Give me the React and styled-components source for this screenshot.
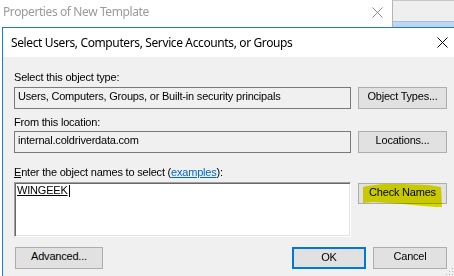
import React from "react";
import styled, { createGlobalStyle } from "styled-components";

const Global = createGlobalStyle`
  html, body { margin: 0; padding: 0; background: #fff; }
  body {
    width: 454px; height: 276px; overflow: hidden;
    font-family: "Liberation Sans", Arial, sans-serif;
  }
`;

const Screen = styled.div`
  width: 454px;
  height: 276px;
  overflow: hidden;
  background: #fff;
  display: flex;
  flex-direction: column;
  position: relative;
`;

const BackTitleBar = styled.div`
  height: 27px;
  flex-shrink: 0;
  display: flex;
  align-items: stretch;
`;

const BackTitle = styled.div`
  flex: 1;
  padding: 5px 0 0 3px;
  font-family: "Noto Sans", "Liberation Sans", sans-serif;
  font-size: 12px;
  line-height: 14px;
  letter-spacing: -0.4px;
  color: #9a9a9a;
  white-space: nowrap;
`;

const CloseBox = styled.div`
  width: ${(p) => p.$w}px;
  display: flex;
  align-items: ${(p) => (p.$top ? "flex-start" : "center")};
  justify-content: center;
  padding-top: ${(p) => (p.$top ? 7 : 0)}px;
  flex-shrink: 0;
`;

const Pane = styled.div`
  width: 61px;
  flex-shrink: 0;
  border-left: 1px solid #b4b4b4;
  border-top: 1px solid #c8c8c8;
  display: flex;
  flex-direction: column;
`;

const PaneTop = styled.div`
  flex: 1;
  background: #efefef;
`;

const PaneStrip = styled.div`
  height: 5px;
  border-top: 1px solid #9cbfe6;
  background: linear-gradient(#c3daf3, #b7d2f0);
`;

const Dialog = styled.div`
  flex: 1;
  margin-left: 2px;
  border-left: 1px solid #1c7bd4;
  border-top: 1px solid #1c7bd4;
  display: flex;
  flex-direction: column;
  background: #f0f0f0;
`;

const DialogTitleBar = styled.div`
  height: 29px;
  flex-shrink: 0;
  background: #fff;
  display: flex;
  align-items: center;
  justify-content: space-between;
  padding: 0 6px 0 8px;
`;

const DialogTitle = styled.div`
  font-family: "Noto Sans", "Liberation Sans", sans-serif;
  font-size: 12px;
  line-height: 16px;
  letter-spacing: -0.38px;
  color: #000;
  white-space: nowrap;
`;

const Client = styled.div`
  flex: 1;
  padding: 14px 7px 0 11px;
  display: flex;
  flex-direction: column;
  font-size: 11px;
  letter-spacing: -0.2px;
  color: #000;
  position: relative;
`;

const Label = styled.div`
  line-height: 13px;
  height: 13px;
  margin-top: ${(p) => p.$mt || 0}px;
  white-space: nowrap;
`;

const Accel = styled.span`
  text-decoration: underline;
`;

const Link = styled.span`
  color: #0066cc;
  text-decoration: underline;
`;

const FieldRow = styled.div`
  display: grid;
  grid-template-columns: 337px 89px;
  column-gap: 7px;
  margin-top: ${(p) => p.$mt}px;
  align-items: start;
`;

const ReadBox = styled.div`
  height: 22px;
  box-sizing: border-box;
  border: 1px solid #7a7a7a;
  background: #f0f0f0;
  padding-left: 3px;
  line-height: 17px;
  white-space: nowrap;
  overflow: hidden;
`;

const Button = styled.div`
  height: ${(p) => p.$h || 22}px;
  width: ${(p) => (p.$w ? `${p.$w}px` : "auto")};
  box-sizing: border-box;
  border: ${(p) => (p.$default ? "2px solid #0078d7" : "1px solid #adadad")};
  background: #e1e1e1;
  text-align: center;
  line-height: ${(p) => (p.$default ? 16 : 17)}px;
  margin-top: ${(p) => p.$mt || 0}px;
  margin-left: ${(p) => p.$ml || 0}px;
  white-space: nowrap;
  position: relative;
`;

const NamesBox = styled.div`
  height: 55px;
  box-sizing: border-box;
  background: #fff;
  border-top: 1px solid #a0a0a0;
  border-left: 1px solid #a0a0a0;
  border-bottom: 1px solid #fff;
  border-right: 1px solid #fff;
  box-shadow: inset 1px 1px 0 #696969, inset -1px -1px 0 #e3e3e3;
  padding: 1px 0 0 2px;
  line-height: 13px;
`;

const Entered = styled.span`
  text-decoration: underline;
`;

const Caret = styled.span`
  display: inline-block;
  width: 1px;
  height: 12px;
  background: #000;
  vertical-align: -3px;
  margin-left: 1px;
`;

const Highlight = styled.svg`
  position: absolute;
  left: -1px;
  top: -1px;
  mix-blend-mode: multiply;
  pointer-events: none;
`;

const BottomRow = styled.div`
  display: flex;
  align-items: center;
  margin-top: 10px;
`;

const Spacer = styled.div`
  flex: 1;
`;

const Grip = styled.svg`
  position: absolute;
  right: 0;
  bottom: 0;
`;

const XIcon = ({ color, size = 10 }) => (
  <svg width={size + 1} height={size + 1} viewBox={`0 0 ${size + 1} ${size + 1}`}>
    <path
      d={`M0.5 0.5 L${size + 0.5} ${size + 0.5} M${size + 0.5} 0.5 L0.5 ${size + 0.5}`}
      stroke={color}
      strokeWidth="1"
      fill="none"
    />
  </svg>
);

export default function App() {
  return (
    <>
      <Global />
      <Screen>
        <BackTitleBar>
          <BackTitle>Properties of New Template</BackTitle>
          <CloseBox $w={30} $top>
            <XIcon color="#8a8a8a" size={10} />
          </CloseBox>
          <Pane>
            <PaneTop />
            <PaneStrip />
          </Pane>
        </BackTitleBar>
        <Dialog>
          <DialogTitleBar>
            <DialogTitle>Select Users, Computers, Service Accounts, or Groups</DialogTitle>
            <XIcon color="#000" size={10} />
          </DialogTitleBar>
          <Client>
            <Label>Select this object type:</Label>
            <FieldRow $mt={3}>
              <ReadBox>Users, Computers, Groups, or Built-in security principals</ReadBox>
              <Button>Object Types...</Button>
            </FieldRow>

            <Label $mt={7}>From this location:</Label>
            <FieldRow $mt={2}>
              <ReadBox>internal.coldriverdata.com</ReadBox>
              <Button>Locations...</Button>
            </FieldRow>

            <Label $mt={13}>
              <Accel>E</Accel>nter the object names to select (<Link>examples</Link>):
            </Label>
            <FieldRow $mt={3}>
              <NamesBox>
                <Entered>WINGEEK</Entered>
                <Caret />
              </NamesBox>
              <Button $h={21} $mt={1}>
                Check Names
                <Highlight width="92" height="28" viewBox="0 0 92 28">
                  <polygon
                    points="5,4 9,3 25,1 45,1 70,2 83,4 84,24 78,24 65,23 45,21 15,19 5,20"
                    fill="#e4e400"
                  />
                </Highlight>
              </Button>
            </FieldRow>

            <BottomRow>
              <Button $w={88} $ml={1}>Advanced...</Button>
              <Spacer />
              <Button $w={74} $default>OK</Button>
              <Button $w={74} $ml={7}>Cancel</Button>
            </BottomRow>
            <Grip width="9" height="9" viewBox="0 0 9 9">
              <g fill="#b9b9b9">
                <rect x="7" y="1" width="1" height="1" />
                <rect x="7" y="4" width="1" height="1" />
                <rect x="4" y="4" width="1" height="1" />
                <rect x="7" y="7" width="1" height="1" />
                <rect x="4" y="7" width="1" height="1" />
                <rect x="1" y="7" width="1" height="1" />
              </g>
            </Grip>
          </Client>
        </Dialog>
      </Screen>
    </>
  );
}
